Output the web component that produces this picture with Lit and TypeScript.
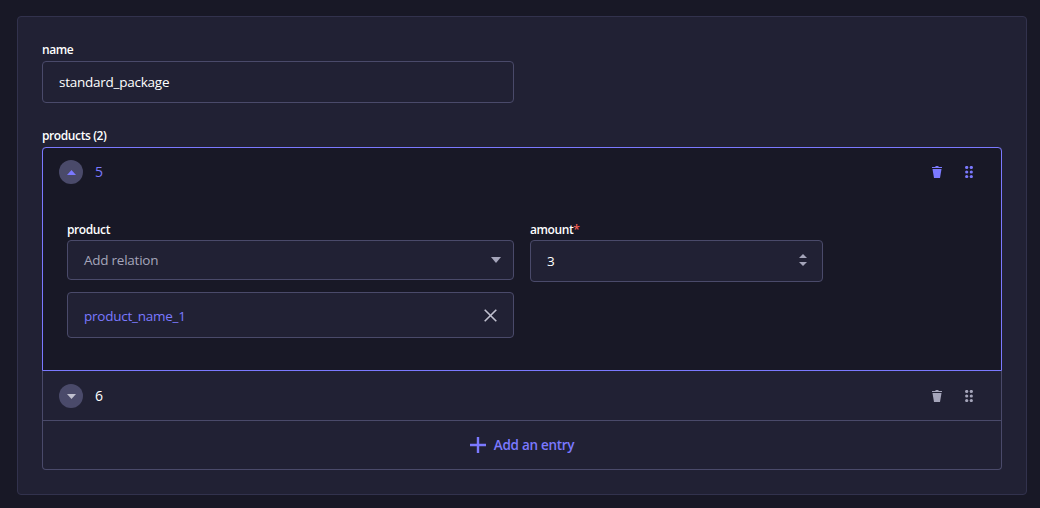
import { LitElement, html, css } from "lit";
import { customElement } from "lit/decorators.js";

const trash = html`<svg class="ic" viewBox="0 0 24 24" fill="currentColor"><path d="M3.236 6.149a.2.2 0 00-.197.233L6 24h12l2.96-17.618a.2.2 0 00-.196-.233H3.236zM21.8 1.983c.11 0 .2.09.2.2v1.584a.2.2 0 01-.2.2H2.2a.2.2 0 01-.2-.2V2.183c0-.11.09-.2.2-.2h5.511c.9 0 1.631-1.09 1.631-1.983h5.316c0 .894.73 1.983 1.631 1.983H21.8z"/></svg>`;
const drag = html`<svg class="ic" viewBox="0 0 12 12" fill="currentColor"><circle cx="3.7" cy="1.5" r="1.6"/><circle cx="3.7" cy="6" r="1.6"/><circle cx="3.7" cy="10.5" r="1.6"/><circle cx="8.3" cy="1.5" r="1.6"/><circle cx="8.3" cy="6" r="1.6"/><circle cx="8.3" cy="10.5" r="1.6"/></svg>`;

@customElement("app-root")
export class AppRoot extends LitElement {
  static styles = css`
    :host { display: block; width: 1040px; height: 508px; overflow: hidden; box-sizing: border-box; padding: 16px 13px 0 17px; background: #181826; font-family: "Open Sans", "Noto Sans", sans-serif; color: #fff; }
    * { box-sizing: border-box; }
    .panel { display: flex; flex-direction: column; gap: 24px; padding: 24px; background: #212134; border: 1px solid #32324d; border-radius: 4px; }
    .field { display: flex; flex-direction: column; }
    .label { font-size: 12px; font-weight: 600; line-height: 18px; height: 16px; margin-bottom: 4px; letter-spacing: -0.4px; }
    .body .label { margin-bottom: 3px; }
    .req { color: #ee5e52; }
    .box { display: flex; align-items: center; background: #212134; border: 1px solid #4a4a6a; border-radius: 4px; font-size: 13.5px; padding: 0 16px; }
    .name { width: 472px; height: 42px; }
    .txt { letter-spacing: -0.25px; }
    .list { display: flex; flex-direction: column; border: 1px solid #4a4a6a; border-radius: 4px; border-top: 0; }
    .item { display: flex; flex-direction: column; }
    .open { background: #181826; border: 1px solid #7b79ff; border-radius: 4px 4px 0 0; margin: 0 -1px; height: 224px; }
    .head { display: flex; align-items: center; height: 48px; padding: 0 24px 0 16px; gap: 12px; font-size: 14px; }
    .closed { height: 50px; border-bottom: 1px solid #4a4a6a; }
    .closed .head { height: 49px; padding-top: 1px; }
    .open .head { color: #7b79ff; }
    .toggle { width: 24px; height: 24px; border-radius: 50%; background: #4a4a6a; display: flex; align-items: center; justify-content: center; color: #c0c0cf; }
    .open .toggle { color: #7b79ff; }
    .toggle svg { width: 9px; height: 5px; display: block; }
    .num { flex: 1; padding-bottom: 2px; }
    .acts { display: flex; gap: 20px; color: #a5a5ba; margin-right: 2px; }
    .open .acts { color: #7b79ff; }
    .ic { width: 12px; height: 12px; display: block; }
    .body { display: grid; grid-template-columns: 447px 292.66px; column-gap: 16px; padding: 25px 24px 0; align-items: start; }
    .sel { height: 40px; justify-content: space-between; color: #a5a5ba; }
    .sel svg { width: 10px; height: 6px; color: #a5a5ba; margin-right: -4px; }
    .tag { height: 46px; margin-top: 12px; justify-content: space-between; color: #7b79ff; }
    .tag .txt { padding-top: 2px; }
    .tag svg { width: 13px; height: 13px; color: #c0c0cf; }
    .num-input { height: 42px; justify-content: space-between; }
    .spin { display: flex; flex-direction: column; gap: 4px; margin-right: -1px; color: #a5a5ba; padding-bottom: 2px; }
    .spin svg { width: 8px; height: 4px; display: block; }
    .add { height: 48px; display: flex; align-items: center; justify-content: center; gap: 8px; color: #7b79ff; font-size: 13.5px; font-weight: 600; }
    .add .txt { letter-spacing: -0.3px; }
    .add svg { width: 16px; height: 16px; display: block; }
  `;

  render() {
    const up = html`<svg viewBox="0 0 8 5" preserveAspectRatio="none" fill="currentColor"><path d="M4 0l4 5H0z"/></svg>`;
    const down = html`<svg viewBox="0 0 8 5" preserveAspectRatio="none" fill="currentColor"><path d="M0 0h8L4 5z"/></svg>`;
    return html`
      <div class="panel">
        <div class="field">
          <div class="label">name</div>
          <div class="box name"><span class="txt">standard_package</span></div>
        </div>
        <div class="field">
          <div class="label">products (2)</div>
          <div class="list">
            <div class="item open">
              <div class="head">
                <span class="toggle">${up}</span>
                <span class="num">5</span>
                <span class="acts">${trash}${drag}</span>
              </div>
              <div class="body">
                <div class="field">
                  <div class="label">product</div>
                  <div class="box sel"><span class="txt">Add relation</span>${down}</div>
                  <div class="box tag"><span class="txt">product_name_1</span>
                    <svg viewBox="0 0 13 13" fill="none" stroke="currentColor" stroke-width="1.6"><path d="M.7.7l11.6 11.6M12.3.7L.7 12.3"/></svg>
                  </div>
                </div>
                <div class="field">
                  <div class="label">amount<span class="req">*</span></div>
                  <div class="box num-input"><span>3</span><span class="spin">${up}${down}</span></div>
                </div>
              </div>
            </div>
            <div class="item closed">
              <div class="head">
                <span class="toggle">${down}</span>
                <span class="num">6</span>
                <span class="acts">${trash}${drag}</span>
              </div>
            </div>
            <div class="add">
              <svg viewBox="0 0 16 16" fill="none" stroke="currentColor" stroke-width="2.4"><path d="M8 0v16M0 8h16"/></svg>
              <span class="txt">Add an entry</span>
            </div>
          </div>
        </div>
      </div>
    `;
  }
}
